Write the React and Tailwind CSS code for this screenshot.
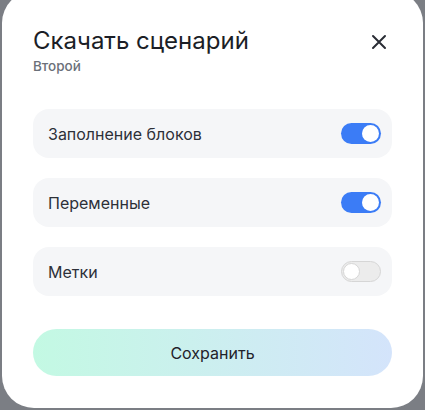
import React from "react";

function Toggle({ on }) {
  return on ? (
    <div className="w-[40px] h-[21px] rounded-full bg-[#3b7cf6] flex items-center justify-end px-[2px]">
      <div className="w-[17px] h-[17px] rounded-full bg-white" />
    </div>
  ) : (
    <div className="w-[40px] h-[21px] rounded-full bg-[#ececec] border border-[#d6d6d6] flex items-center justify-start px-[1px]">
      <div className="w-[17px] h-[17px] rounded-full bg-white border border-[#d6d6d6]" />
    </div>
  );
}

function Row({ label, on }) {
  return (
    <div className="h-[49px] rounded-[16px] bg-[#f5f6f8] flex items-center justify-between pl-[15px] pr-[11px]">
      <span className="text-[16px] text-[#2d3038]">{label}</span>
      <Toggle on={on} />
    </div>
  );
}

export default function App() {
  return (
    <div
      className="w-[425px] h-[410px] bg-[#7b7e84] overflow-hidden"
      style={{ fontFamily: "Inter, 'Noto Sans', sans-serif" }}
    >
      <div className="mt-[-9px] ml-[2px] w-[421px] h-[417px] rounded-[32px] bg-white px-[31px] pt-[36px] flex flex-col">
        <div className="flex items-start justify-between">
          <div className="flex flex-col">
            <h1 className="text-[24px] leading-[28px] text-[#1b1e26]">Скачать сценарий</h1>
            <span className="text-[13.5px] leading-[18px] text-[#6b7079] mt-[2px] font-medium">Второй</span>
          </div>
          <button className="mt-[6px] mr-[4px] w-[18px] h-[18px] flex items-center justify-center">
            <svg width="16" height="16" viewBox="0 0 16 16" fill="none" stroke="#2a2d35" strokeWidth="2" strokeLinecap="round">
              <path d="M2 2L14 14M14 2L2 14" />
            </svg>
          </button>
        </div>
        <div className="mt-[34px] flex flex-col gap-[20px]">
          <Row label="Заполнение блоков" on />
          <Row label="Переменные" on />
          <Row label="Метки" on={false} />
        </div>
        <button className="mt-[33px] h-[47px] rounded-full bg-gradient-to-r from-[#c3f9e3] to-[#d4e4fb] text-[16px] text-[#1f222a]">
          Сохранить
        </button>
      </div>
    </div>
  );
}
